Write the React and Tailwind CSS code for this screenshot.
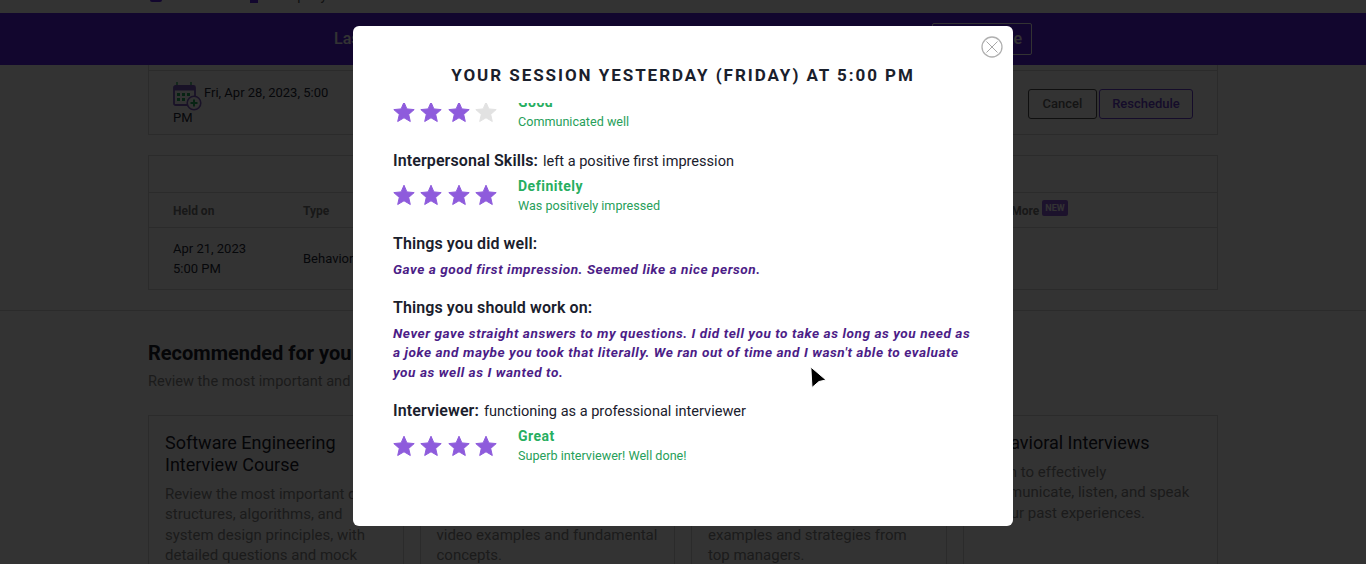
import React from "react";

const Star = ({ on }) => (
  <svg viewBox="0 0 24 24" className="w-[24px] h-[24px] block">
    <polygon
      points="12,2.2 14.9,8.9 22.2,9.6 16.7,14.4 18.3,21.5 12,17.8 5.7,21.5 7.3,14.4 1.8,9.6 9.1,8.9"
      fill={on ? "#8e5bdc" : "#e2e2e2"}
      stroke={on ? "#8e5bdc" : "#e2e2e2"}
      strokeWidth="1"
      strokeLinejoin="round"
    />
  </svg>
);

const Rating = ({ count, label, note, className }) => (
  <div className={`flex items-center ${className}`}>
    <div className="w-[126px] flex gap-[3.4px] -ml-[1px]">
      {[1, 2, 3, 4].map((n) => (
        <Star key={n} on={n <= count} />
      ))}
    </div>
    <div>
      <div className="text-[14px] leading-[20px] font-bold tracking-[0.5px] text-[#27ae60]">{label}</div>
      <div className="text-[12.6px] leading-[19.5px] text-[#27a05a]">{note}</div>
    </div>
  </div>
);

const Heading = ({ title, detail, className }) => (
  <div className={`h-[24px] leading-[24px] text-[#1a202c] ${className}`}>
    <span className="text-[16px] font-semibold tracking-[0.1px]">{title}</span>
    {detail && <span className="text-[14.55px] ml-[5px]">{detail}</span>}
  </div>
);

const Comment = ({ children, className }) => (
  <p className={`text-[13.6px] leading-[19.6px] font-bold italic tracking-[0.55px] text-[#4c1d87] ${className}`}>
    {children}
  </p>
);

const CalendarIcon = () => (
  <svg viewBox="0 0 29 29" className="inline-block w-[29px] h-[29px] mr-[2px] -mt-[4px] -mb-[10px]">
    <path d="M4 0v4M18 0v4" stroke="#27ae60" strokeWidth="1.4" />
    <rect x="1" y="4" width="21" height="19" rx="1.5" fill="none" stroke="#7c5cc4" strokeWidth="1.8" />
    <path d="M1 6.5h21" stroke="#7c5cc4" strokeWidth="4" />
    <path d="M4 11h3v3H4zM9 11h3v3H9zM14 11h3v3h-3zM4 16h3v3H4zM9 16h3v3H9z" fill="#27ae60" />
    <circle cx="21" cy="21" r="6.8" fill="#fff" stroke="#7c5cc4" strokeWidth="1.6" />
    <path d="M21 17.5v7M17.5 21h7" stroke="#27ae60" strokeWidth="2" />
  </svg>
);

const courses = [
  {
    title: "Software Engineering Interview Course",
    lines: ["Review the most important data", "structures, algorithms, and", "system design principles, with", "detailed questions and mock"],
  },
  {
    title: "Data Structures and Algorithms Course",
    lines: ["Master core coding topics with", "practice problems, walkthroughs,", "video examples and fundamental", "concepts."],
  },
  {
    title: "Engineering Management Interview Course",
    lines: ["Prepare for leadership rounds", "with real interview questions,", "examples and strategies from", "top managers."],
  },
  {
    title: "Behavioral Interviews",
    lines: ["Learn to effectively", "communicate, listen, and speak", "in your past experiences."],
  },
];

export default function App() {
  return (
    <div className="relative h-[564px] w-[1366px] overflow-hidden bg-white font-['Roboto',sans-serif] text-[#1f2937]">
      {/* page behind the modal, scrolled so the nav is nearly gone */}
      <div className="h-[13px] overflow-hidden flex items-start">
        <div className="ml-[150px] w-[12px] h-[2px] rounded-b-full bg-[#5a1ee6]" />
        <div className="ml-[88px] w-[8px] h-[3px] bg-[#5a1ee6]" />
        <span className="ml-[10px] -mt-[13px] text-[14px] leading-[16px] text-[#555]">Company</span>
      </div>
      <div className="h-[52px] bg-[#5a1ee6] flex items-center text-white">
        <span className="ml-[334px] text-[16px] font-medium">Last session feedback is here</span>
        <button className="ml-auto mr-[334px] w-[100px] h-[32px] border border-white rounded-[2px] text-[16px] font-medium text-right pr-[9px]">
          Note
        </button>
      </div>

      <div className="mx-[148px] w-[1070px]">
        <div className="h-[70px] border border-t-0 border-[#d8d8d8]">
          <div className="h-[6px] border-b border-[#d8d8d8]" />
          <div className="flex justify-between pl-[24px] pr-[24px]">
            <div className="w-[170px] text-[13px] leading-[25px] pt-[9px]">
              <CalendarIcon />
              Fri, Apr 28, 2023, 5:00 PM
            </div>
            <div className="flex gap-[2px] mt-[18px] text-[13px] font-medium">
              <button className="w-[69px] h-[30px] border border-[#4a4a4a] rounded-[3px] text-[#666]">Cancel</button>
              <button className="w-[94px] h-[30px] border border-[#6b3fd0] rounded-[3px] text-[#6b3fd0]">Reschedule</button>
            </div>
          </div>
        </div>

        <div className="mt-[20px] h-[135px] border border-[#d8d8d8]">
          <div className="h-[37px] border-b border-[#d8d8d8]" />
          <div className="h-[35px] border-b border-[#d8d8d8] flex items-center pt-[2px] pl-[24px] text-[12px] font-bold text-[#777]">
            <span className="w-[130px]">Held on</span>
            <span>Type</span>
            <span className="ml-[682px]">More</span>
            <span className="ml-[3px] -mt-[7px] px-[3px] h-[16px] leading-[16px] rounded-[2px] bg-[#8e5bdc] text-white text-[9px]">NEW</span>
          </div>
          <div className="flex items-center h-[61px] pl-[24px] text-[13px]">
            <div className="w-[130px] leading-[20px]">
              Apr 21, 2023
              <br />
              5:00 PM
            </div>
            <span>Behavioral</span>
          </div>
        </div>
      </div>

      <div className="mt-[20px] border-t border-[#d8d8d8] px-[148px]">
        <h2 className="mt-[30px] text-[20px] leading-[24px] font-bold text-[#1a202c]">Recommended for you</h2>
        <p className="mt-[6px] text-[14.6px] leading-[20px] text-[#888]">Review the most important and relevant topics for your next interview</p>
        <div className="mt-[24px] grid grid-cols-4 gap-[16px] w-[1070px]">
          {courses.map((c) => (
            <div key={c.title} className="h-[200px] border border-[#d8d8d8] px-[16px] pt-[16px]">
              <h3 className="text-[18px] leading-[22px] text-[#1a202c]">{c.title}</h3>
              <p className="mt-[8px] text-[15px] leading-[20.3px] text-[#888]">
                {c.lines.map((line) => (
                  <span key={line} className="block whitespace-nowrap">{line}</span>
                ))}
              </p>
            </div>
          ))}
        </div>
      </div>

      {/* overlay + modal */}
      <div className="absolute inset-0 bg-black/80 flex justify-center items-start pt-[26px]">
        <div className="relative w-[660px] h-[500px] rounded-[6px] bg-white flex flex-col overflow-hidden">
          <svg viewBox="0 0 22 22" className="absolute top-[10px] right-[10px] w-[22px] h-[22px]">
            <circle cx="11" cy="11" r="10" fill="none" stroke="#b0b0b0" strokeWidth="1.3" />
            <path d="M5.5 5.5l11 11M16.5 5.5l-11 11" stroke="#a8a8a8" strokeWidth="1" />
          </svg>
          <h1 className="h-[77px] pt-[38px] text-center text-[17px] leading-[22px] font-bold tracking-[1.95px] text-[#1a202c] whitespace-pre">
            YOUR SESSION YESTERDAY (FRIDAY) AT 5:00 PM
          </h1>
          <div className="flex-1 overflow-hidden pl-[40px] pr-[40px]">
            <Rating className="-mt-[11px]" count={3} label="Good" note="Communicated well" />
            <Heading className="mt-[17px]" title="Interpersonal Skills:" detail="left a positive first impression" />
            <Rating className="mt-[3px]" count={4} label="Definitely" note="Was positively impressed" />
            <Heading className="mt-[16.5px]" title="Things you did well:" />
            <Comment className="mt-[4px]">Gave a good first impression. Seemed like a nice person.</Comment>
            <Heading className="mt-[17.4px]" title="Things you should work on:" />
            <Comment className="mt-[3.2px]">
              Never gave straight answers to my questions. I did tell you to take as long as you need as a joke and maybe you took that literally. We ran out of time and I wasn't able to evaluate you as well as I wanted to.
            </Comment>
            <Heading className="mt-[16.8px]" title="Interviewer:" detail="functioning as a professional interviewer" />
            <Rating className="mt-[3px]" count={4} label="Great" note="Superb interviewer! Well done!" />
          </div>
        </div>
      </div>

      {/* mouse pointer */}
      <svg viewBox="0 0 18 23" className="absolute left-[809px] top-[366px] w-[18px] h-[23px]">
        <path d="M1.8 1L17 14l-7 1.5L3 21.5z" fill="#000" stroke="#fff" strokeWidth="1" strokeLinejoin="round" />
      </svg>
    </div>
  );
}
